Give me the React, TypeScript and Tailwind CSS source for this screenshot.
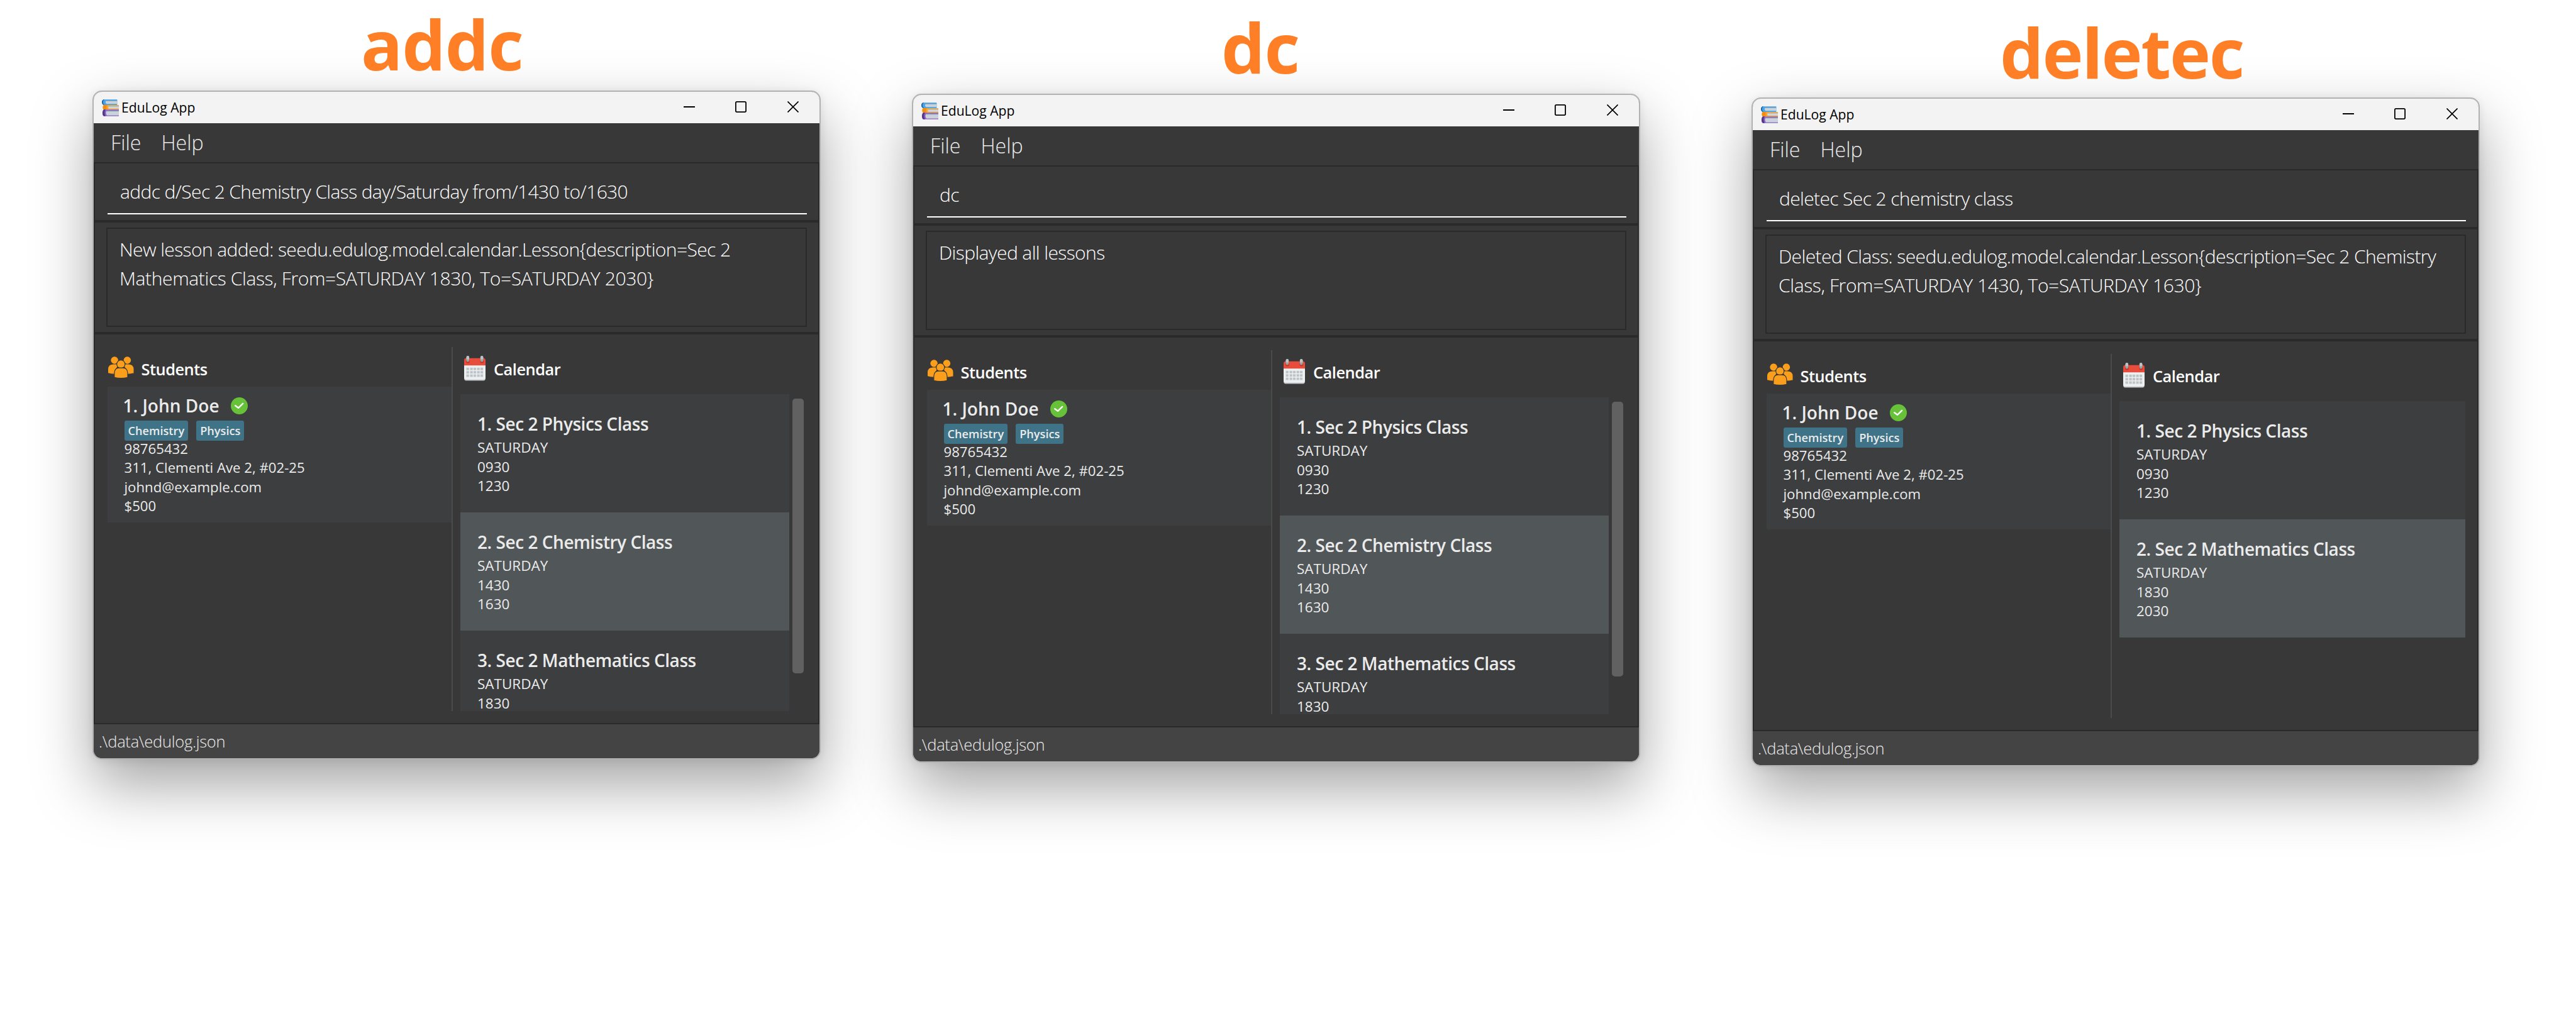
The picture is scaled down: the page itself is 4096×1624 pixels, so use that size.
import type { ReactNode } from "react";

type Lesson = { title: string; day: string; from: string; to: string; selected?: boolean };

type AppWindowProps = {
  command: string;
  result: string[];
  lessons: Lesson[];
  scrollable?: boolean;
};

function BooksIcon() {
  return (
    <svg viewBox="0 0 92 91" className="h-[27px] w-[27px] shrink-0">
      <path d="M8 0H83V30H8Q0 26 0 15Q0 4 8 0Z" fill="#4aa3ea" />
      <path d="M8 0H13Q6 5 6 15Q6 25 13 30H8Q0 26 0 15Q0 4 8 0Z" fill="#1b6298" />
      <path d="M25 6H83V24H25Q20 20 20 15Q20 10 25 6Z" fill="#c8d3da" />
      <path d="M25 6H83V10H22Z" fill="#93a5b3" />
      <path d="M10 30H92V55H10Q5 52 5 43Q5 34 10 30Z" fill="#f9a62b" />
      <path d="M10 30H30Q24 36 24 43Q24 50 30 55H10Q5 52 5 43Q5 34 10 30Z" fill="#f68c0c" />
      <path d="M38 35H92V50H38Q34 46 34 43Q34 39 38 35Z" fill="#cfd8de" />
      <path d="M38 35H92V39H35Z" fill="#a9a796" />
      <path d="M10 55H92V91H10Q3 86 3 73Q3 60 10 55Z" fill="#8d62c4" />
      <path d="M10 55H20Q15 62 15 73Q15 84 20 91H10Q3 86 3 73Q3 60 10 55Z" fill="#54378c" />
      <path d="M27 61H92V86H27Q22 80 22 73Q22 66 27 61Z" fill="#c8d3da" />
      <path d="M27 61H92V65H25Z" fill="#8f9fb0" />
    </svg>
  );
}

function StudentsIcon() {
  return (
    <svg viewBox="0 0 136 114" className="mt-[15px] h-[34px] w-[40.5px] shrink-0">
      <g fill="#fb9e1b">
        <circle cx="34" cy="20" r="19.5" />
        <circle cx="102" cy="20" r="19.5" />
        <path d="M0 92V66Q2 42 28 42H44Q50 43 54 48L40 66Q33 74 33 93Q14 93 0 88Z" />
        <path d="M136 92V66Q134 42 108 42H92Q86 43 82 48L96 66Q103 74 103 93Q122 93 136 88Z" />
      </g>
      <g fill="#fb9e1b" stroke="#383838" strokeWidth="4">
        <circle cx="68" cy="41" r="22" />
        <path d="M33 112V88Q35 61 58 61H79Q102 61 104 88V112Q68 120 33 112Z" />
      </g>
    </svg>
  );
}

function CalendarIcon() {
  const columns = [12, 32, 50, 69, 87];
  const rows = [63, 81, 99];
  return (
    <svg viewBox="0 0 114 132" className="mt-[14px] h-[39.5px] w-[34px] shrink-0">
      <path d="M0 60H114V122Q112 132 104 132H10Q2 132 0 122Z" fill="#bdc3c7" />
      <path d="M0 48H114V116Q112 126 104 126H10Q2 126 0 116Z" fill="#ecf0f1" />
      <path d="M0 51V22Q1 12 11 12H103Q113 12 114 22V51Z" fill="#e74c3c" />
      <g fill="#c0392b">
        <circle cx="20" cy="29" r="10" />
        <circle cx="95" cy="29" r="10" />
      </g>
      {[12, 87].map((x) => (
        <g key={x}>
          <rect x={x} y="0" width="15" height="32" rx="7.5" fill="#95a5a6" />
          <path d={`M${x} 18V7.5a7.5 7.5 0 0 1 15 0V18Z`} fill="#bdc3c7" />
        </g>
      ))}
      {rows.map((y) =>
        columns.map((x) => <rect key={`${x}-${y}`} x={x} y={y} width="14" height="13" fill="#bdc3c7" />)
      )}
    </svg>
  );
}

function CheckBadge() {
  return (
    <svg viewBox="0 0 90 90" className="h-[27px] w-[27px] shrink-0">
      <circle cx="45" cy="45" r="45" fill="#67c23a" />
      <path d="M24 44L40 56L64 33" fill="none" stroke="#fff" strokeWidth="8" strokeLinejoin="round" strokeLinecap="round" />
    </svg>
  );
}

function TitleBar() {
  return (
    <div className="flex h-[50px] items-center bg-[#f3f3f3] pl-[13px] pr-[33px]">
      <BooksIcon />
      <span className="pl-[4px] text-[21.1px] leading-[50px] text-black">EduLog App</span>
      <svg viewBox="0 0 20 20" className="mb-[2px] ml-auto h-[18px] w-[18px]">
        <path d="M0 10H20" stroke="#000" strokeWidth="2" />
      </svg>
      <svg viewBox="0 0 20 20" className="mb-[2px] ml-[64px] h-[18px] w-[18px]">
        <rect x="1" y="1" width="18" height="18" rx="2" fill="none" stroke="#000" strokeWidth="2" />
      </svg>
      <svg viewBox="0 0 20 20" className="mb-[2px] ml-[65px] h-[18px] w-[18px]">
        <path d="M0.5 0.5L19.5 19.5M19.5 0.5L0.5 19.5" stroke="#000" strokeWidth="1.9" />
      </svg>
    </div>
  );
}

function Tag({ children }: { children: ReactNode }) {
  return (
    <span className="h-[32px] rounded-[3px] bg-[#3e7388] px-[6px] text-[18.2px] font-semibold leading-[32px] text-[#ebebeb]">
      {children}
    </span>
  );
}

function StudentCard() {
  return (
    <div className="h-[216px] bg-[#3c3e3f] pl-[26.5px] pt-[13px] text-[#ebebeb]">
      <div className="-ml-[2px] flex items-center">
        <span className="text-[28px] font-semibold leading-[34px]">1. John Doe</span>
        <span className="ml-[18px] mt-[2px]">
          <CheckBadge />
        </span>
      </div>
      <div className="mt-[7px] flex gap-[13px]">
        <Tag>Chemistry</Tag>
        <Tag>Physics</Tag>
      </div>
      <div className="-mt-[2px] text-[22.2px] leading-[30.6px]">
        <div>98765432</div>
        <div>311, Clementi Ave 2, #02-25</div>
        <div>johnd@example.com</div>
        <div>$500</div>
      </div>
    </div>
  );
}

function LessonCard({ lesson, index }: { lesson: Lesson; index: number }) {
  return (
    <div
      className={`h-[188px] shrink-0 pl-[27px] pt-[30px] text-[#ebebeb] ${
        lesson.selected ? "bg-[#515658]" : "bg-[#3c3e3f]"
      }`}
    >
      <div className="text-[28px] font-semibold leading-[34px] tracking-[-0.46px]">
        {index}. {lesson.title}
      </div>
      <div className="mt-[6px] text-[22.5px] leading-[30.6px]">
        <div>{lesson.day}</div>
        <div>{lesson.from}</div>
        <div>{lesson.to}</div>
      </div>
    </div>
  );
}

function AppWindow({ command, result, lessons, scrollable = false }: AppWindowProps) {
  return (
    <div className="h-[1064px] w-[1158px] overflow-hidden rounded-[15px] border-2 border-[#b2b2b2] bg-[#383838] bg-clip-padding shadow-[0_40px_95px_rgba(0,0,0,0.36),0_2px_14px_rgba(0,0,0,0.08)]">
      <TitleBar />
      <div className="flex h-[62px] gap-[32px] pl-[27px] text-[32.2px] font-light leading-[61px] text-[#ebebeb]">
        <span>File</span>
        <span>Help</span>
      </div>

      <div className="h-[94px] border-2 border-[#2a2a2a] pl-[20px] pr-[18px]">
        <div className="flex h-[81px] items-center border-b-2 border-white pl-[20px] pt-[9px] text-[30px] font-light tracking-[-0.63px] text-white">
          {command}
        </div>
      </div>

      <div className="h-[178px] border-2 border-[#2a2a2a] py-[8px] pl-[18px] pr-[18px]">
        <div className="h-[158px] border-2 border-[#2a2a2a] pl-[19px] pt-[10px] text-[30px] font-light leading-[46px] tracking-[-0.37px] text-white">
          {result.map((line) => (
            <div key={line} className="whitespace-nowrap first:tracking-[-0.6px]">
              {line}
            </div>
          ))}
        </div>
      </div>

      <div className="flex h-[622px] border-2 border-[#2a2a2a] pb-[19px] pl-[20px] pr-[19px] pt-[20px]">
        <div className="w-[547px]">
          <div className="flex h-[62.5px] pl-[1px]">
            <StudentsIcon />
            <span className="pl-[12px] text-[25.4px] font-semibold leading-[70px] tracking-[-0.5px] text-white">
              Students
            </span>
          </div>
          <StudentCard />
        </div>
        <div className="flex flex-1 flex-col border-l-2 border-[#4b4b4b] pl-[12px]">
          <div className="flex h-[75px] shrink-0 pl-[6px]">
            <CalendarIcon />
            <span className="pl-[13px] text-[25.4px] font-semibold leading-[70px] tracking-[-0.5px] text-white">
              Calendar
            </span>
          </div>
          <div className="flex min-h-0 flex-1">
            <div className="flex min-w-0 flex-1 flex-col overflow-hidden">
              {lessons.map((lesson, i) => (
                <LessonCard key={lesson.title} lesson={lesson} index={i + 1} />
              ))}
            </div>
            {scrollable && <div className="ml-[5px] mr-[4px] mt-[7px] h-[437px] w-[18px] rounded-[5px] bg-[#616161]" />}
          </div>
        </div>
      </div>

      <div className="h-[54px] bg-[#444444] pl-[8px] text-[25.5px] font-light leading-[54px] tracking-[-0.27px] text-[#ebebeb]">
        .\data\edulog.json
      </div>
    </div>
  );
}

const physics: Lesson = { title: "Sec 2 Physics Class", day: "SATURDAY", from: "0930", to: "1230" };
const chemistry: Lesson = { title: "Sec 2 Chemistry Class", day: "SATURDAY", from: "1430", to: "1630", selected: true };
const mathematics: Lesson = { title: "Sec 2 Mathematics Class", day: "SATURDAY", from: "1830", to: "2030" };

export default function App() {
  return (
    <div className="flex h-[1624px] w-[4096px] overflow-hidden bg-white pl-[147px] font-['Open_Sans','Noto_Sans',sans-serif]">
      <section className="mr-[145px] w-[1158px] shrink-0">
        <h1 className="mb-[6px] pl-[427px] text-[110px] font-bold leading-[138px] tracking-[-1.1px] text-[#ff7f27]">addc</h1>
        <AppWindow
          command="addc d/Sec 2 Chemistry Class day/Saturday from/1430 to/1630"
          result={[
            "New lesson added: seedu.edulog.model.calendar.Lesson{description=Sec 2",
            "Mathematics Class, From=SATURDAY 1830, To=SATURDAY 2030}",
          ]}
          lessons={[physics, chemistry, mathematics]}
          scrollable
        />
      </section>

      <section className="mr-[177px] w-[1158px] shrink-0">
        <h1 className="pl-[492px] text-[110px] font-bold leading-[149px] tracking-[-1.1px] text-[#ff7f27]">dc</h1>
        <AppWindow
          command="dc"
          result={["Displayed all lessons"]}
          lessons={[physics, chemistry, mathematics]}
          scrollable
        />
      </section>

      <section className="w-[1158px] shrink-0 pt-[10px]">
        <h1 className="pl-[395px] text-[110px] font-bold leading-[145px] tracking-[-2.2px] text-[#ff7f27]">deletec</h1>
        <AppWindow
          command="deletec Sec 2 chemistry class"
          result={[
            "Deleted Class: seedu.edulog.model.calendar.Lesson{description=Sec 2 Chemistry",
            "Class, From=SATURDAY 1430, To=SATURDAY 1630}",
          ]}
          lessons={[physics, { ...mathematics, selected: true }]}
        />
      </section>
    </div>
  );
}
